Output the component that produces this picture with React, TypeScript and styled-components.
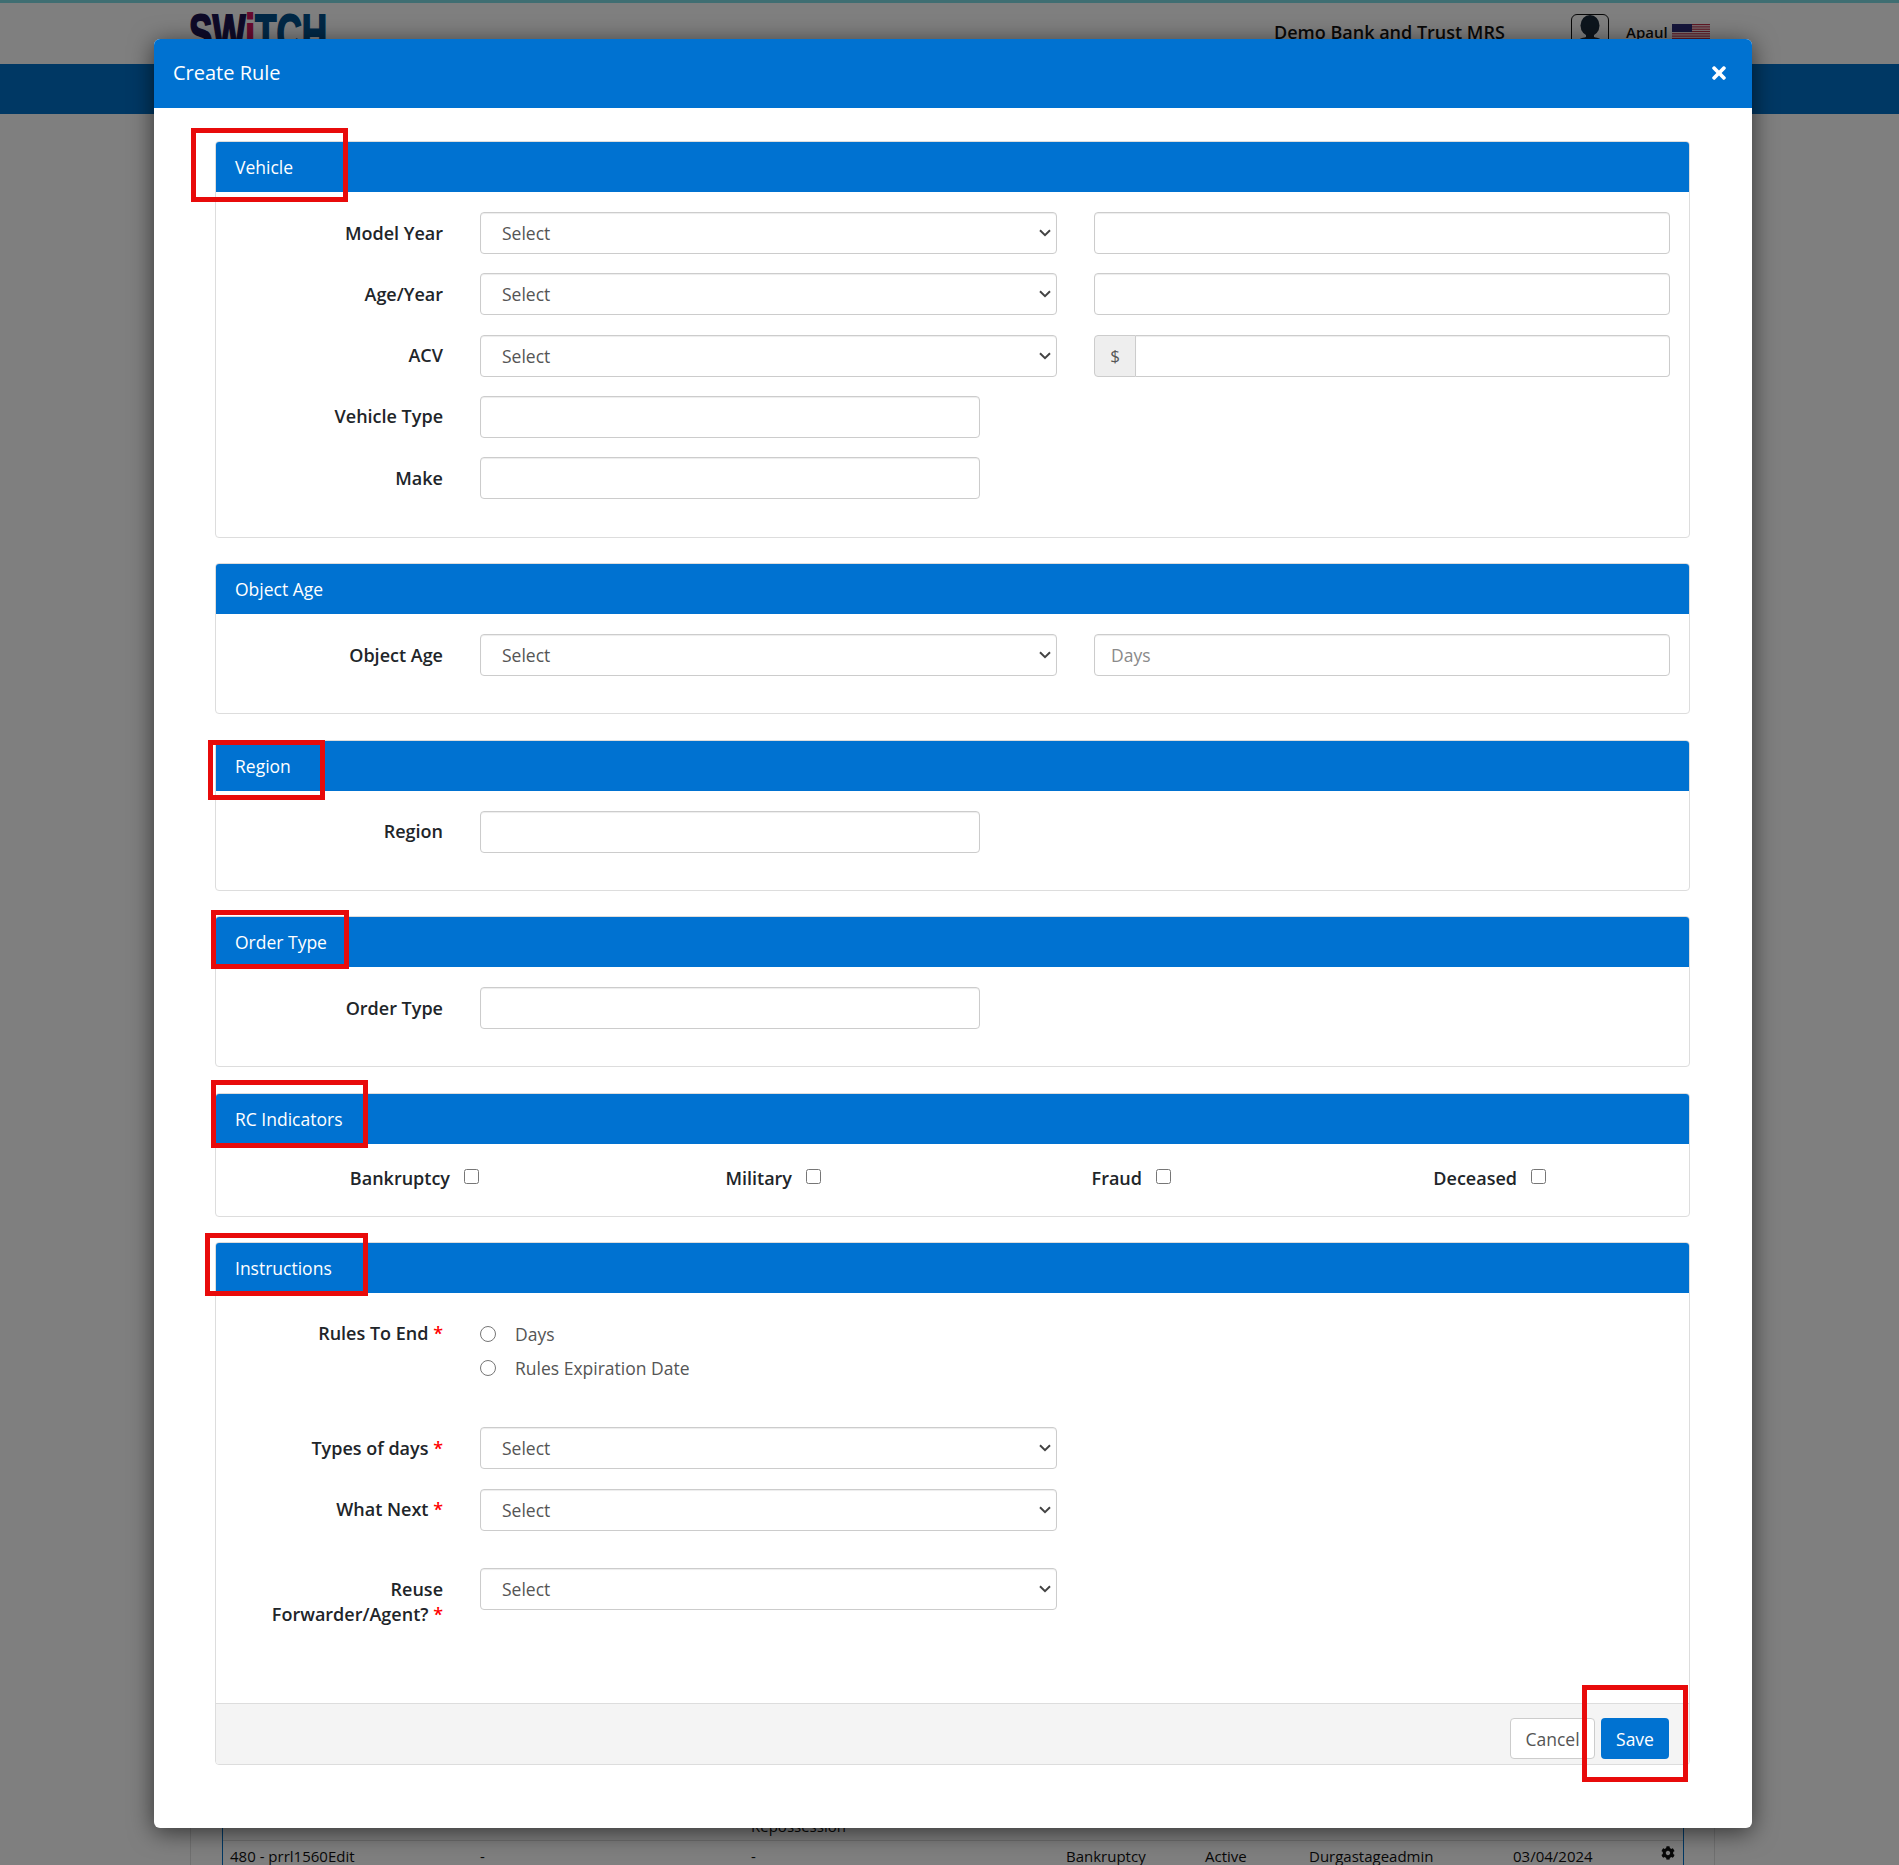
import React from 'react';
import styled, { createGlobalStyle } from 'styled-components';
import { FaCog, FaTimes } from 'react-icons/fa';

const GlobalStyle = createGlobalStyle`
	html, body {
		margin: 0;
		padding: 0;
		background: #fff;
		font-family: "Open Sans", "Noto Sans", sans-serif;
		color: #212529;
	}
	* {
		box-sizing: border-box;
	}
`;

const BLUE = '#0072d1';
const CHEVRON =
	"data:image/svg+xml,%3Csvg xmlns='http://www.w3.org/2000/svg' width='12' height='8' viewBox='0 0 12 8'%3E%3Cpath d='M1 1.2l5 5 5-5' fill='none' stroke='%23444' stroke-width='2'/%3E%3C/svg%3E";

const App: React.FunctionComponent = () => {
	return (
		<Page>
			<GlobalStyle />
			<Topbar>
				<Logo>
					<LogoText>
						SW<LogoDot>i</LogoDot>
						<LogoEnd>TCH</LogoEnd>
					</LogoText>
				</Logo>
				<BankName>Demo Bank and Trust MRS</BankName>
				<Avatar>
					<svg width="36" height="40" viewBox="0 0 36 40">
						<ellipse cx="18" cy="10.5" rx="9.5" ry="10.5" fill="#1b2a3a" />
						<path d="M14 18h8v4c4 1 9 2 11 6v12H3V28c2-4 7-5 11-6z" fill="#1b2a3a" />
					</svg>
				</Avatar>
				<UserName>Apaul</UserName>
				<Flag />
			</Topbar>
			<Nav />
			<Spacer />
			<TableCard>
				<TableBox>
					<TableRow $height={36} $pad={11}>
						<span />
						<span />
						<span>Repossession</span>
					</TableRow>
					<TableRow $height={40} $pad={5}>
						<span>480 - prrl1560Edit</span>
						<span>-</span>
						<span>-</span>
						<span>Bankruptcy</span>
						<span>Active</span>
						<span>Durgastageadmin</span>
						<span>03/04/2024</span>
						<FaCog size={14} color="#111" />
					</TableRow>
				</TableBox>
			</TableCard>
			<Overlay />
			<Modal>
				<ModalHeader>
					<ModalTitle>Create Rule</ModalTitle>
					<CloseButton>
						<FaTimes size={20} />
					</CloseButton>
				</ModalHeader>
				<ModalBody>
					<Panel>
						<PanelHeader>Vehicle</PanelHeader>
						<Highlight $left={-25} $top={-14} $width={157} $height={74} />
						<PanelBody $bottom={18.5}>
							<FormRow>
								<Label>Model Year</Label>
								<SelectBox />
								<Input />
							</FormRow>
							<FormRow>
								<Label>Age/Year</Label>
								<SelectBox />
								<Input />
							</FormRow>
							<FormRow>
								<Label>ACV</Label>
								<SelectBox />
								<InputGroup>
									<Addon>$</Addon>
									<GroupInput />
								</InputGroup>
							</FormRow>
							<FormRow>
								<Label>Vehicle Type</Label>
								<ShortInput />
							</FormRow>
							<FormRow>
								<Label>Make</Label>
								<ShortInput />
							</FormRow>
						</PanelBody>
					</Panel>

					<Panel>
						<PanelHeader>Object Age</PanelHeader>
						<PanelBody>
							<FormRow>
								<Label>Object Age</Label>
								<SelectBox />
								<Input placeholder="Days" />
							</FormRow>
						</PanelBody>
					</Panel>

					<Panel>
						<PanelHeader>Region</PanelHeader>
						<Highlight $left={-8} $top={-1} $width={117} $height={60} />
						<PanelBody>
							<FormRow>
								<Label>Region</Label>
								<ShortInput />
							</FormRow>
						</PanelBody>
					</Panel>

					<Panel>
						<PanelHeader>Order Type</PanelHeader>
						<Highlight $left={-5} $top={-7} $width={138} $height={59} />
						<PanelBody>
							<FormRow>
								<Label>Order Type</Label>
								<ShortInput />
							</FormRow>
						</PanelBody>
					</Panel>

					<Panel>
						<PanelHeader>RC Indicators</PanelHeader>
						<Highlight $left={-5} $top={-14} $width={157} $height={68} />
						<IndicatorRow>
							<Indicator>
								<IndicatorLabel>Bankruptcy</IndicatorLabel>
								<Check type="checkbox" />
							</Indicator>
							<Indicator>
								<IndicatorLabel>Military</IndicatorLabel>
								<Check type="checkbox" />
							</Indicator>
							<Indicator>
								<IndicatorLabel>Fraud</IndicatorLabel>
								<Check type="checkbox" />
							</Indicator>
							<Indicator>
								<IndicatorLabel>Deceased</IndicatorLabel>
								<Check type="checkbox" />
							</Indicator>
						</IndicatorRow>
					</Panel>

					<Panel>
						<PanelHeader>Instructions</PanelHeader>
						<Highlight $left={-11} $top={-10} $width={163} $height={63} />
						<InstructionsBody>
							<FormRow $gap={47} $top>
								<Label>
									Rules To End <Required>*</Required>
								</Label>
								<RadioGroup>
									<RadioRow>
										<Radio type="radio" name="end" />
										Days
									</RadioRow>
									<RadioRow>
										<Radio type="radio" name="end" />
										Rules Expiration Date
									</RadioRow>
								</RadioGroup>
							</FormRow>
							<FormRow>
								<Label>
									Types of days <Required>*</Required>
								</Label>
								<SelectBox />
							</FormRow>
							<FormRow $gap={37}>
								<Label>
									What Next <Required>*</Required>
								</Label>
								<SelectBox />
							</FormRow>
							<FormRow $gap={0} $top>
								<WrappedLabel>
									Reuse Forwarder/Agent? <Required>*</Required>
								</WrappedLabel>
								<SelectBox />
							</FormRow>
						</InstructionsBody>
						<PanelFooter>
							<CancelButton>Cancel</CancelButton>
							<SaveButton>Save</SaveButton>
						</PanelFooter>
						<Highlight $left={1366} $top={442} $width={106} $height={97} />
					</Panel>
				</ModalBody>
			</Modal>
		</Page>
	);
};

const SelectBox: React.FunctionComponent = () => (
	<Select defaultValue="">
		<option value="">Select</option>
	</Select>
);

const Flag: React.FunctionComponent = () => (
	<FlagIcon width="38" height="15" viewBox="0 0 38 15">
		<rect width="38" height="15" fill="#fff" />
		{[0, 2.3, 4.6, 6.9, 9.2, 11.5, 13.8].map((y) => (
			<rect key={y} y={y} width="38" height="1.2" fill="#c0304a" />
		))}
		<rect width="20" height="8" fill="#2c2c78" />
	</FlagIcon>
);

const Page = styled.div`
	position: relative;
	display: flex;
	flex-direction: column;
	height: 1865px;
	overflow: hidden;
	background: #fff;
`;

const Overlay = styled.div`
	position: absolute;
	inset: 0;
	background: rgba(0, 0, 0, 0.5);
`;

const Topbar = styled.div`
	display: flex;
	align-items: flex-start;
	height: 64px;
	padding: 0 0 0 189px;
	border-top: 3px solid #7edce4;
	background: #fff;
`;

const Logo = styled.div`
	width: 137px;
	height: 50px;
	margin-top: 3px;
`;

const LogoText = styled.div`
	font-family: "Liberation Sans", sans-serif;
	font-size: 54px;
	line-height: 54px;
	font-weight: 700;
	color: #1c1450;
	-webkit-text-stroke: 2px currentColor;
	white-space: nowrap;
	transform: scaleX(0.65);
	transform-origin: left top;
`;

const LogoDot = styled.span`
	color: #d0145f;
`;

const LogoEnd = styled.span`
	color: #00508c;
`;

const BankName = styled.div`
	margin: 17px 0 0 948px;
	width: 297px;
	font-size: 18px;
	line-height: 25px;
	font-weight: 600;
	color: #111;
`;

const Avatar = styled.div`
	width: 38px;
	height: 42px;
	margin-top: 11px;
	border: 1px solid #111;
	border-radius: 6px;
	overflow: hidden;
`;

const UserName = styled.div`
	margin: 19px 0 0 17px;
	font-size: 15px;
	line-height: 20px;
	font-weight: 600;
	color: #111;
`;

const FlagIcon = styled.svg`
	margin: 21px 0 0 4px;
`;

const Nav = styled.div`
	height: 50px;
	background: #0070c8;
`;

const Spacer = styled.div`
	flex: 1;
	background: #fff;
`;

const TableCard = styled.div`
	width: 1525px;
	height: 60px;
	margin-left: 190px;
	padding: 0 30px 0 31px;
	border-left: 1px solid #e0e0e0;
	border-right: 1px solid #e0e0e0;
`;

const TableBox = styled.div`
	border-left: 1px solid #0070c8;
	border-right: 1px solid #0070c8;
`;

const TableRow = styled.div<{ $height: number; $pad: number }>`
	display: grid;
	grid-template-columns: 250px 271px 315px 139px 104px 204px 148px 14px;
	align-items: start;
	height: ${(p) => p.$height}px;
	padding: ${(p) => p.$pad}px 0 0 7px;
	border-bottom: 1px solid #ddd;
	font-size: 15px;
	line-height: 20px;
	color: #111;
`;

const Modal = styled.div`
	position: absolute;
	top: 39px;
	left: 154px;
	width: 1598px;
	height: 1789px;
	border-radius: 6px;
	background: #fff;
	box-shadow: 0 4px 24px rgba(0, 0, 0, 0.6);
`;

const ModalHeader = styled.div`
	display: flex;
	align-items: center;
	justify-content: space-between;
	height: 69px;
	padding: 0 23px 2px 19px;
	border-radius: 6px 6px 0 0;
	background: ${BLUE};
	color: #fff;
`;

const ModalTitle = styled.div`
	font-size: 20px;
	line-height: 27px;
`;

const CloseButton = styled.div`
	display: flex;
	align-items: center;
	color: #fff;
`;

const ModalBody = styled.div`
	display: flex;
	flex-direction: column;
	gap: 25.5px;
	padding: 33px 62px 0 61px;
`;

const Panel = styled.div`
	position: relative;
	border: 1px solid #ddd;
	border-radius: 4px;
	background: #fff;
`;

const PanelHeader = styled.div`
	height: 50px;
	padding-left: 19px;
	border-radius: 3px 3px 0 0;
	background: ${BLUE};
	color: #fff;
	font-size: 17.5px;
	line-height: 50px;
`;

const Highlight = styled.div<{ $left: number; $top: number; $width: number; $height: number }>`
	position: absolute;
	left: ${(p) => p.$left}px;
	top: ${(p) => p.$top}px;
	width: ${(p) => p.$width}px;
	height: ${(p) => p.$height}px;
	border: 5px solid #e80b0b;
	pointer-events: none;
`;

const PanelBody = styled.div<{ $bottom?: number }>`
	padding: 20px 0 ${(p) => p.$bottom ?? 17.7}px;
`;

const FormRow = styled.div<{ $gap?: number; $top?: boolean }>`
	display: grid;
	grid-template-columns: 227px 577px 576px;
	column-gap: 37px;
	align-items: ${(p) => (p.$top ? 'start' : 'center')};
	margin-bottom: ${(p) => p.$gap ?? 19.3}px;
`;

const Label = styled.label`
	font-size: 18px;
	line-height: 25px;
	font-weight: 600;
	text-align: right;
	color: #212529;
`;

const WrappedLabel = styled(Label)`
	padding: 9px 0 0 40px;
`;

const Required = styled.span`
	color: #f00;
`;

const Select = styled.select`
	width: 577px;
	height: 42px;
	padding: 0 24px 0 21px;
	border: 1px solid #ccc;
	border-radius: 4px;
	background: #fff url("${CHEVRON}") no-repeat right 5px center;
	box-shadow: inset 0 1px 1px rgba(0, 0, 0, 0.075);
	color: #555;
	font-family: inherit;
	font-size: 17.5px;
	appearance: none;
`;

const Input = styled.input`
	width: 100%;
	height: 42px;
	padding: 0 16px;
	border: 1px solid #ccc;
	border-radius: 4px;
	background: #fff;
	box-shadow: inset 0 1px 1px rgba(0, 0, 0, 0.075);
	color: #555;
	font-family: inherit;
	font-size: 17.5px;

	&::placeholder {
		color: #8a8a8a;
		opacity: 1;
	}
`;

const ShortInput = styled(Input)`
	width: 500px;
`;

const InputGroup = styled.div`
	display: flex;
	height: 42px;
`;

const Addon = styled.div`
	width: 42px;
	border: 1px solid #ccc;
	border-radius: 4px 0 0 4px;
	background: #eee;
	color: #555;
	font-size: 17px;
	line-height: 40px;
	text-align: center;
`;

const GroupInput = styled(Input)`
	flex: 1;
	border-left: 0;
	border-radius: 0 4px 4px 0;
`;

const IndicatorRow = styled.div`
	display: grid;
	grid-template-columns: 263px 342px 350px 375px;
	height: 72px;
	padding-top: 22px;
`;

const Indicator = styled.div`
	display: flex;
	justify-content: flex-end;
	align-items: flex-start;
	gap: 14px;
`;

const IndicatorLabel = styled.span`
	font-size: 18px;
	line-height: 25px;
	font-weight: 600;
`;

const Check = styled.input`
	width: 15px;
	height: 15px;
	margin: 3px 0 0;
`;

const InstructionsBody = styled.div`
	height: 410px;
	padding-top: 28px;
`;

const RadioGroup = styled.div`
	display: flex;
	flex-direction: column;
	gap: 9px;
`;

const RadioRow = styled.label`
	display: flex;
	align-items: center;
	height: 25px;
	color: #555;
	font-size: 17.5px;
`;

const Radio = styled.input`
	width: 16px;
	height: 16px;
	margin: 0 19px 0 0;
`;

const PanelFooter = styled.div`
	display: flex;
	justify-content: flex-end;
	align-items: flex-start;
	gap: 6px;
	height: 61px;
	padding: 14px 20px 0 0;
	border-top: 1px solid #ddd;
	border-radius: 0 0 3px 3px;
	background: #f4f4f4;
`;

const CancelButton = styled.button`
	width: 85px;
	height: 41px;
	border: 1px solid #ccc;
	border-radius: 4px;
	background: #fff;
	color: #555;
	font-family: inherit;
	font-size: 17.5px;
`;

const SaveButton = styled.button`
	width: 68px;
	height: 41px;
	border: 0;
	border-radius: 4px;
	background: ${BLUE};
	color: #fff;
	font-family: inherit;
	font-size: 17.5px;
`;

export default App;
